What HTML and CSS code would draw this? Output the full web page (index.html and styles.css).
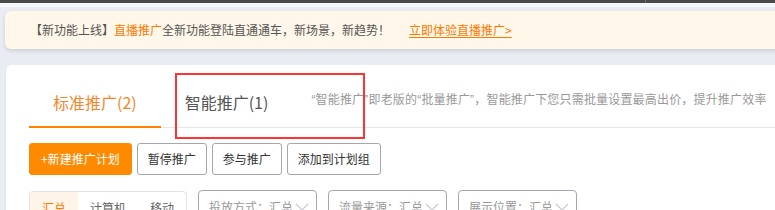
FILE: index.html
```html
<!DOCTYPE html>
<html lang="zh-CN">
<head>
<meta charset="utf-8">
<title>推广</title>
<link rel="stylesheet" href="styles.css">
</head>
<body>
<div class="topbar"><div class="topbar-left"></div></div>
<div class="strip"></div>
<div class="main">
  <div class="notice">
    <span class="notice-text">【新功能上线】<span class="hl">直播推广</span>全新功能登陆直通通车，新场景，新趋势！</span>
    <a class="notice-link" href="#">立即体验直播推广&gt;</a>
  </div>
  <div class="card">
    <div class="tabs">
      <div class="tab active">标准推广(2)</div>
      <div class="tab">智能推广(1)</div>
      <div class="tab-desc">“智能推广”即老版的“批量推广”，智能推广下您只需批量设置最高出价，提升推广效率</div>
    </div>
    <div class="actions">
      <button class="btn primary">+新建推广计划</button>
      <button class="btn">暂停推广</button>
      <button class="btn">参与推广</button>
      <button class="btn">添加到计划组</button>
    </div>
    <div class="filters">
      <div class="segmented">
        <span class="seg on">汇总</span>
        <span class="seg">计算机</span>
        <span class="seg">移动</span>
      </div>
      <div class="select">投放方式：汇总<svg class="chev" width="14" height="8" viewBox="0 0 14 8"><path d="M1 1 L7 7 L13 1" fill="none" stroke="#c8cbd2" stroke-width="1.2"/></svg></div>
      <div class="select">流量来源：汇总<svg class="chev" width="14" height="8" viewBox="0 0 14 8"><path d="M1 1 L7 7 L13 1" fill="none" stroke="#c8cbd2" stroke-width="1.2"/></svg></div>
      <div class="select">展示位置：汇总<svg class="chev" width="14" height="8" viewBox="0 0 14 8"><path d="M1 1 L7 7 L13 1" fill="none" stroke="#c8cbd2" stroke-width="1.2"/></svg></div>
    </div>
  </div>
</div>
<div class="annot"></div>
</body>
</html>
```
FILE: styles.css
```css
html, body {
  margin: 0;
  padding: 0;
  overflow: hidden;
}
body {
  background: #e9ecf3;
  font-family: "Noto Sans CJK SC", "Microsoft YaHei", sans-serif;
  font-size: 12px;
  color: #555;
  width: 1000px;
  height: 210px;
  position: relative;
}
.topbar {
  height: 3px;
  background: #4a4a4a;
  display: flex;
}
.topbar-left {
  width: 645px;
  border-right: 1px solid #6a6a6a;
}
.strip {
  height: 4px;
  background: #f7f8fb;
}
.main {
  padding: 4px 0 0 5px;
}
.notice {
  height: 38px;
  line-height: 38px;
  background: #fff7ea;
  border-radius: 6px;
  box-shadow: 0 2px 4px rgba(0, 0, 0, 0.12);
  padding-left: 25px;
  display: flex;
  white-space: nowrap;
}
.notice-text {
  color: #555;
}
.hl {
  color: #ff7a00;
}
.notice-link {
  margin-left: 19px;
  color: #ff7a00;
  text-decoration: underline;
  text-underline-offset: 2px;
}
.card {
  margin-top: 16px;
  background: #fff;
  border-top-left-radius: 6px;
  border-left: 1px solid #e3e6ed;
  padding: 13px 0 0 23px;
  height: 200px;
}
.tabs {
  display: flex;
  align-items: flex-start;
  border-bottom: 1px solid #e6e6e6;
  height: 49px;
}
.tab {
  font-size: 16px;
  line-height: 48px;
  padding: 0 24px;
  color: #555;
  border-bottom: 2px solid transparent;
  white-space: nowrap;
}
.tab.active {
  color: #f8852b;
  border-bottom-color: #ff8200;
}
.tab-desc {
  margin-left: 19px;
  line-height: 44px;
  color: #999;
  white-space: nowrap;
  letter-spacing: 0.18px;
  font-family: "Liberation Sans", "Noto Sans CJK SC", sans-serif;
}
.actions {
  margin-top: 15px;
  display: flex;
  gap: 5px;
}
.btn {
  font-family: inherit;
  font-size: 12px;
  height: 32px;
  line-height: 30px;
  padding: 0 10px;
  border: 1px solid #a3a7b0;
  border-radius: 3px;
  background: #fff;
  color: #333;
}
.btn.primary {
  background: #ff8a00;
  border-color: #ff8a00;
  color: #fff;
  padding: 0 11px;
}
.filters {
  margin-top: 15px;
  display: flex;
  gap: 11px;
  align-items: flex-start;
}
.segmented {
  display: flex;
  border: 1px solid #e3e3e3;
  border-radius: 4px;
  overflow: hidden;
  height: 32px;
  margin-top: 1px;
}
.seg {
  padding: 0 12px;
  line-height: 32px;
  color: #666;
}
.seg.on {
  background: #fff4e8;
  color: #ff7a00;
}
.select {
  width: 107px;
  height: 32px;
  line-height: 32px;
  border: 1px solid #a3a7b0;
  border-radius: 4px;
  padding: 0 0 0 10px;
  color: #999;
  display: flex;
  align-items: center;
  white-space: nowrap;
}
.chev {
  margin-left: 2px;
}
.annot {
  position: absolute;
  left: 175px;
  top: 73px;
  width: 186px;
  height: 62px;
  border: 2px solid #f33;
}
```
